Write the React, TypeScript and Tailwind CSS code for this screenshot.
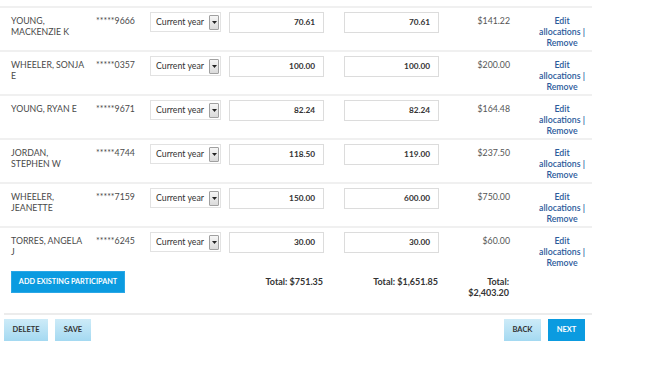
import React from "react";

type Row = { name: React.ReactNode; ssn: string; a: string; b: string; amt: string };

const rows: Row[] = [
  { name: <>YOUNG,<br />MACKENZIE K</>, ssn: "*****9666", a: "70.61", b: "70.61", amt: "$141.22" },
  { name: <>WHEELER, SONJA<br />E</>, ssn: "*****0357", a: "100.00", b: "100.00", amt: "$200.00" },
  { name: <>YOUNG, RYAN E</>, ssn: "*****9671", a: "82.24", b: "82.24", amt: "$164.48" },
  { name: <>JORDAN,<br />STEPHEN W</>, ssn: "*****4744", a: "118.50", b: "119.00", amt: "$237.50" },
  { name: <>WHEELER,<br />JEANETTE</>, ssn: "*****7159", a: "150.00", b: "600.00", amt: "$750.00" },
  { name: <>TORRES, ANGELA<br />J</>, ssn: "*****6245", a: "30.00", b: "30.00", amt: "$60.00" },
];

function Select() {
  return (
    <div className="shrink-0 w-[71px] h-[20px] mt-[1px] flex items-center border border-[#e2e2e2] bg-white">
      <span className="pl-[5px] flex-1 text-[8.75px] text-[#333] whitespace-nowrap">Current year</span>
      <span className="w-[10px] h-[15px] mr-[1px] flex items-center justify-center border border-[#a0a0a0] bg-gradient-to-b from-[#f6f6f6] to-[#dadada] rounded-[1px]">
        <svg width="5" height="3" viewBox="0 0 5 3"><path d="M0 0h5L2.5 3z" fill="#222" /></svg>
      </span>
    </div>
  );
}

function NumInput({ v }: { v: string }) {
  return (
    <div className="h-[21px] mt-[1px] flex items-center justify-end pr-[8px] border border-[#dcdcdc] bg-white text-[8.25px] font-bold text-[#333]">
      {v}
    </div>
  );
}

export default function App() {
  return (
    <div
      className="w-[656px] h-[373px] bg-white text-[#444]"
      style={{ fontFamily: "Lato, 'Open Sans', sans-serif" }}
    >
      <div className="w-[592px] pt-[6px]">
        {rows.map((r) => (
          <div key={r.ssn} className="flex items-start h-[44px] border-t-2 border-[#f0f0f0] pt-[3px]">
            <div className="shrink-0 w-[96px] pl-[11px] pt-[4px] text-[8.75px] leading-[11px] text-[#4a4a4a]">{r.name}</div>
            <div className="shrink-0 w-[54px] pt-[4px] text-[8.75px] leading-[11px] text-[#4a4a4a]">{r.ssn}</div>
            <Select />
            <div className="shrink-0 w-[95px] ml-[8px]"><NumInput v={r.a} /></div>
            <div className="shrink-0 w-[95px] ml-[20px]"><NumInput v={r.b} /></div>
            <div className="shrink-0 w-[71px] pt-[4px] text-right text-[8.75px] leading-[11px] text-[#555]">{r.amt}</div>
            <div className="shrink-0 w-[52px] ml-[26px] pt-[4px] text-center text-[8.75px] leading-[11px] font-semibold text-[#2b5a9b]">
              Edit allocations | Remove
            </div>
          </div>
        ))}
        <div className="flex items-start pt-[1px] h-[43px]">
          <div className="shrink-0 ml-[11px] w-[114px] h-[22px] flex items-center justify-center bg-[#0b9be0] border border-[#2aa7e6] text-white text-[7.25px] font-bold">
            ADD EXISTING PARTICIPANT
          </div>
          <div className="shrink-0 w-[198px] pt-[5px] text-right text-[9px] leading-[11px] font-bold text-[#333]">Total: $751.35</div>
          <div className="shrink-0 w-[115px] pt-[5px] text-right text-[9px] leading-[11px] font-bold text-[#333]">Total: $1,651.85</div>
          <div className="shrink-0 w-[71px] pt-[5px] text-right text-[9px] leading-[11px] font-bold text-[#333]">Total:<br />$2,403.20</div>
        </div>
        <div className="ml-[4px] border-t-2 border-[#ececec] pt-[4px] flex">
          <div className="w-[44px] h-[22px] flex items-center justify-center bg-gradient-to-b from-[#cdebf8] to-[#a4d9f1] text-[7.5px] font-bold text-[#333]">DELETE</div>
          <div className="w-[36px] h-[22px] ml-[7px] flex items-center justify-center bg-gradient-to-b from-[#cdebf8] to-[#a4d9f1] text-[7.5px] font-bold text-[#333]">SAVE</div>
          <div className="flex-1" />
          <div className="w-[37px] h-[22px] flex items-center justify-center bg-gradient-to-b from-[#cdebf8] to-[#a4d9f1] text-[7.5px] font-bold text-[#333]">BACK</div>
          <div className="w-[37px] h-[22px] ml-[7px] mr-[7px] flex items-center justify-center bg-[#0b9be0] text-[7.5px] font-bold text-white">NEXT</div>
        </div>
      </div>
    </div>
  );
}
